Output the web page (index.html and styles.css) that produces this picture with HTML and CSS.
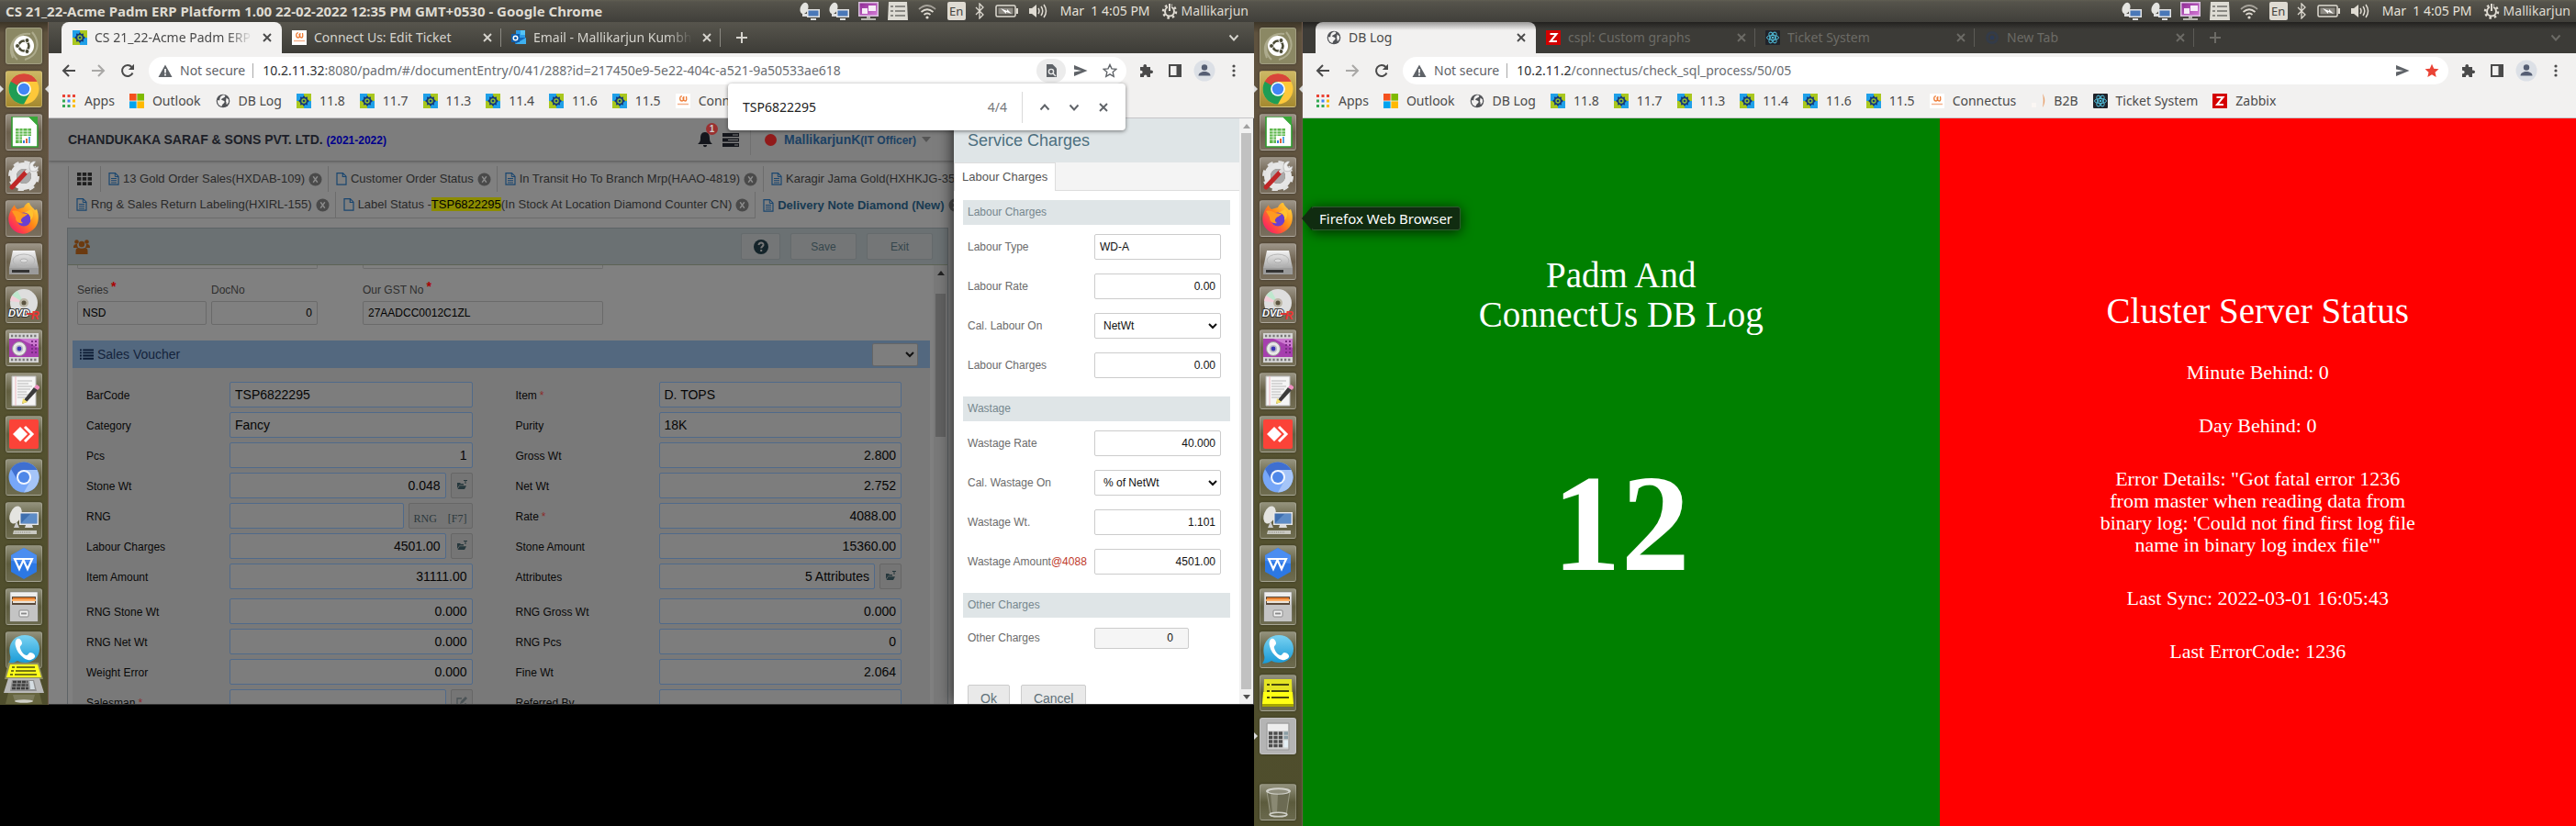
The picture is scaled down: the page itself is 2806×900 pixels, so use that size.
FILE: index.html
```html
<!DOCTYPE html>
<html lang="en">
<head>
<meta charset="utf-8">
<title>Dual monitor desktop</title>
<link rel="stylesheet" href="styles.css">
</head>
<body>
<svg class="defs" aria-hidden="true">
<defs>
<linearGradient id="gGrey" x1="0" y1="0" x2="0" y2="1"><stop offset="0" stop-color="#f4f4f4"/><stop offset="1" stop-color="#a9a9a9"/></linearGradient>
<linearGradient id="gFox" x1="1" y1="0" x2="0" y2="1"><stop offset="0" stop-color="#ffe94a"/><stop offset=".45" stop-color="#ff8a16"/><stop offset=".75" stop-color="#ff3b4d"/><stop offset="1" stop-color="#e3107c"/></linearGradient>
<linearGradient id="gPhone" x1="0" y1="0" x2="0" y2="1"><stop offset="0" stop-color="#7bd3f2"/><stop offset="1" stop-color="#1799d6"/></linearGradient>
<linearGradient id="gPink" x1="0" y1="0" x2="1" y2="1"><stop offset="0" stop-color="#8e2a94"/><stop offset="1" stop-color="#d47ad6"/></linearGradient>
<symbol id="ubuntu" viewBox="0 0 34 34"><path d="M5 30C-2 14 10 2 24 4M10 32C0 22 4 8 17 6M26 2c10 12 6 26-8 30" fill="none" stroke="#c4c3a8" stroke-width="2" opacity=".6"/><circle cx="17" cy="17" r="11" fill="#fff"/><circle cx="17" cy="17" r="5.500" fill="none" stroke="#4a4a35" stroke-width="2.600"/><g fill="#4a4a35" stroke="#fff" stroke-width="1"><circle cx="10" cy="17" r="2.500"/><circle cx="20.500" cy="11" r="2.500"/><circle cx="20.500" cy="23" r="2.500"/></g></symbol>
<symbol id="chrome" viewBox="0 0 34 34"><circle cx="17" cy="17" r="16.500" fill="#fdc83a"/><path d="M17 17 2.700 8.800A16.500 16.500 0 0 1 31.300 8.800H17z" fill="#d8453a"/><path d="M2.700 8.800A16.500 16.500 0 0 0 17 33.500L24 21 17 17z" fill="#1f9d55"/><path d="M9.800 21.200 2.700 8.800 17 9z" fill="#1f9d55"/><path d="M2.700 8.800A16.500 16.500 0 0 1 31.300 8.800H17A8 8 0 0 0 10 13z" fill="#d8453a"/><circle cx="17" cy="17" r="7.800" fill="#fff"/><circle cx="17" cy="17" r="6.200" fill="#4286f5"/></symbol>
<symbol id="sheet" viewBox="0 0 34 34"><path d="M4 0h19l9 9v24H4z" fill="#fff" stroke="#2e9b2e" stroke-width="1.600"/><path d="M22 0h10v10z" fill="#38a838"/><path d="M8 13h17v16H8z" fill="#5fb84d"/><path d="M8 16h17M8 19h17M8 22h17M8 25h17M12 13v16M16 13v16M21 13v16" stroke="#fff" stroke-width=".8"/><path d="M15 21h11v9H15z" fill="#fff"/><path d="M16 26h2v3h-2z" fill="#3b7dd8"/><path d="M19 24h2v5h-2z" fill="#e0643a"/><path d="M22 22h2v7h-2z" fill="#58a6e0"/></symbol>
<symbol id="settings" viewBox="0 0 34 34"><circle cx="17" cy="18" r="11.500" fill="none" stroke="#e6e6e6" stroke-width="7"/><circle cx="17" cy="18" r="15" fill="none" stroke="#e2e2e2" stroke-width="4" stroke-dasharray="6 5.780"/><circle cx="17" cy="18" r="8" fill="#aaa"/><path d="M4 30 19 14" stroke="#bf2727" stroke-width="5" stroke-linecap="round"/><path d="M19 14 26 8" stroke="#ddd" stroke-width="4"/><path d="M23 8c0-5 4-7 7-6l-3 4 2 3 4-2c0 5-5 7-9 5z" fill="#eee" stroke="#999" stroke-width=".5"/></symbol>
<symbol id="firefox" viewBox="0 0 34 34"><path d="M2 10c2-5 4-6 5-8 0 3 2 4 3 5l7-2c1-3 4-5 6-6 0 4 4 6 6 9l2-1c4 10 1 19-5 23-6 5-15 5-21-1C0 24-1 17 2 10z" fill="url(#gFox)"/><circle cx="17" cy="18" r="7.500" fill="#6a3fd0"/><path d="M4 9c4-1 7 0 10 2l7 1c-2 3-5 3-6 5-2 1-1 4 1 5-5 1-8-2-8-6z" fill="#ff9a1f"/><path d="M17 11c5-1 8 3 7 8 4-3 4-9 1-12z" fill="#ffc22e"/></symbol>
<symbol id="disk" viewBox="0 0 34 34"><path d="M5 5h24l4 19H1z" fill="url(#gGrey)"/><path d="M1 24h32v7H1z" fill="#9b9b9b"/><path d="M4 26h19v3H4z" fill="#333"/><ellipse cx="17" cy="16" rx="12" ry="7" fill="none" stroke="#b5b5b5"/><ellipse cx="17" cy="16" rx="4" ry="2" fill="#ddd" stroke="#a0a0a0" stroke-width=".7"/></symbol>
<symbol id="dvd" viewBox="0 0 34 34"><circle cx="17" cy="15" r="15" fill="#dedede"/><path d="M17 15 4 7A15 15 0 0 1 10 2z" fill="#bfe8cf"/><path d="M17 15 2 13A15 15 0 0 1 4 7z" fill="#f3cfd9"/><circle cx="17" cy="15" r="5" fill="#bdb8a8"/><circle cx="17" cy="15" r="2.500" fill="#5b5340"/><text x="0" y="30" font-family="Liberation Sans, sans-serif" font-size="11" font-weight="bold" font-style="italic" fill="#fff" stroke="#333" stroke-width="2" paint-order="stroke">DVD</text><path d="M20 26h6v2h-6z" fill="#d33"/><text x="25" y="33" font-family="Liberation Sans, sans-serif" font-size="12" font-weight="bold" font-style="italic" fill="#e33">R</text></symbol>
<symbol id="cam" viewBox="0 0 34 34"><path d="M1 1h32v32H1z" fill="#d5d5d5"/><path d="M1 7h32v20H1z" fill="#a63fae"/><path d="M12 7h21v10z" fill="#cc79d0"/><path d="M3 4h28M3 30h28" stroke="#777" stroke-width="2.500" stroke-dasharray="2.200 2"/><path d="M26 9v16M30 9v16" stroke="#7b2b85" stroke-width="2" stroke-dasharray="2 2"/><circle cx="12" cy="18" r="7.500" fill="#e8e8e8" stroke="#999"/><circle cx="12" cy="18" r="4" fill="#b9b9c4"/><circle cx="12" cy="18" r="2.400" fill="#3d35b5"/></symbol>
<symbol id="edit" viewBox="0 0 34 34"><path d="M4 1h26v32H4z" fill="#f5f5f5" stroke="#bbb"/><path d="M8 1v32" stroke="#f2b8c0"/><path d="M10 6h16M10 9h12M10 12h16M10 15h14M10 18h10M10 21h12M10 24h9" stroke="#b9b9b9" stroke-width="1"/><path d="M16 28 28 13l4 3-12 13-5 2z" fill="#3b3b3b"/><path d="m15 31 1-6 5 4z" fill="#f2df6b"/><path d="m28 13 3-3 4 3-3 3z" fill="#f08fc0"/></symbol>
<symbol id="anydesk" viewBox="0 0 34 34"><rect x="1" y="1" width="32" height="32" rx="2" fill="#fb4338"/><path d="m5 17 8-8 8 8-8 8z" fill="#fff"/><path d="m18 9 8 8-8 8" fill="none" stroke="#fff" stroke-width="3"/></symbol>
<symbol id="chromium" viewBox="0 0 34 34"><circle cx="17" cy="17" r="16.500" fill="#77a7f8"/><path d="M17 9h14.300A16.500 16.500 0 0 0 3 8l7 12z" fill="#3f6fd0"/><path d="M24 21 17 33.500A16.500 16.500 0 0 0 31.500 9H20z" fill="#a5c5f8"/><circle cx="17" cy="17" r="8" fill="#f1f6ff"/><circle cx="17" cy="17" r="6" fill="#4e87e8"/></symbol>
<symbol id="remote" viewBox="0 0 34 34"><ellipse cx="8" cy="11" rx="6" ry="10" transform="rotate(22 8 11)" fill="#e4e4e0"/><path d="m9 18 3 7H6z" fill="#ccc"/><rect x="12" y="8" width="21" height="14" fill="#e8e8e8"/><rect x="13.500" y="9.500" width="18" height="11" fill="#3f6fae"/><path d="M14 20 24 10h7v10z" fill="#5d8cc6"/><path d="M19 22h7l1 3h-9z" fill="#ddd"/><path d="M6 28h25v4H5z" fill="#c9c9c2"/><path d="M7 30h17" stroke="#8b8b80" stroke-dasharray="1 1"/></symbol>
<symbol id="wps" viewBox="0 0 34 34"><path d="m17 0 14 8v18l-14 8-14-8V8z" fill="#2c78e4"/><path d="m17 0 14 8v9L3 14V8z" fill="#4b8df0"/><path d="M7 12h9l5 11 5-11h-9l-5 11z" fill="none" stroke="#fff" stroke-width="2.200"/></symbol>
<symbol id="files" viewBox="0 0 34 34"><path d="M2 1h30v32H2z" fill="url(#gGrey)" stroke="#888" stroke-width=".6"/><path d="M4 6h26v9H4z" fill="#5b4a3a"/><path d="M5 7h24v2H5z" fill="#e07b2d"/><path d="M4 9h26v2H4z" fill="#ffb066"/><path d="M5 11h24v2H5z" fill="#e9e4dc"/><path d="M2 15h30v18H2z" fill="#c4c4c4"/><rect x="12" y="21" width="10" height="7" rx="1" fill="#f3f3f3" stroke="#888"/><path d="M14 23.500h6v2h-6z" fill="#8a8a8a"/></symbol>
<symbol id="phone" viewBox="0 0 34 34"><path d="M18 1c9 0 16 6 16 15s-7 15-16 15c-3 0-6-1-8-2-3 2-6 3-10 3 2-3 3-6 2-9C-1 10 7 1 18 1z" fill="url(#gPhone)"/><path d="M10 5c3-1 5 3 5 5s-3 3-2 5c1 4 4 8 7 8 2 0 2-3 4-3 3 0 6 3 5 5-3 4-8 4-12 1C12 22 9 18 8 13c-1-4 0-7 2-8z" fill="#fff"/></symbol>
<symbol id="notes" viewBox="0 0 34 34"><path d="M2 2h30l1 28H1z" fill="#e4e424"/><path d="M1 16h32l1 13H0z" fill="#ffff14"/><path d="M0 29h34v3H0z" fill="#a6a600"/><path d="M5 8h3M10 8h19M5 15h3M10 15h19M5 22h3M10 22h19" stroke="#4a4a10" stroke-width="2.200"/></symbol>
<symbol id="calculator" viewBox="0 0 34 34"><path d="M5 3h24v29H5z" fill="#d0d0d0" stroke="#999"/><path d="M6 4h22v7H6z" fill="#ededed"/><path d="M7 14h15M7 18.500h15M7 23h15M7 27.500h15" stroke="#4c4c4c" stroke-width="3.300" stroke-dasharray="4.200 1.200"/><path d="M23.500 14H28M23.500 18.500H28" stroke="#8b9ea6" stroke-width="3.300"/><path d="M23.500 21.500H28v8h-4.500z" fill="#e4eff5"/></symbol>
<symbol id="trash" viewBox="0 0 34 34"><path d="M5 5h25l-4 27H9z" fill="#6c6b53" stroke="#a5a490" stroke-width=".8"/><path d="M9 8h8l-1 21h-5z" fill="#8a8973"/><ellipse cx="17.500" cy="5" rx="13.500" ry="3.800" fill="#d2d2cb"/><ellipse cx="17.500" cy="5.500" rx="11" ry="2.200" fill="#8f8e7c"/><ellipse cx="17.500" cy="30.500" rx="9.500" ry="2.300" fill="none" stroke="#cfcfc6" stroke-width="1.600"/></symbol>

<symbol id="padm" viewBox="0 0 16 16"><path d="M0 0h8v8H0z" fill="#20a0e8"/><path d="M8 0h8v8H8z" fill="#a9c71e"/><path d="M0 8h8v8H0z" fill="#a9c71e"/><path d="M8 8h8v8H8z" fill="#20a0e8"/><path d="M8 2 9.500 4l2.500-.5L11.800 6 14 8l-2.200 2 .2 2.500-2.500-.5L8 14l-1.500-2-2.500.5L4.200 10 2 8l2.200-2L4 3.500l2.500.5z" fill="#14397a"/><circle cx="8" cy="8" r="2.700" fill="#8fbf3a"/><circle cx="8" cy="8" r="1.300" fill="#14397a"/></symbol>
<symbol id="cu" viewBox="0 0 16 16"><path d="M0 0h16v16H0z" fill="#fff"/><path d="M7 3c-3-1-3 5 0 5 2 0 1-3 1-4M9 3c-1 4 0 5 1.500 5S12 6 11.500 3" fill="none" stroke="#ee7a34" stroke-width="1.300"/><path d="M2 11.500h12" stroke="#f4b18c" stroke-width="1.500"/></symbol>
<symbol id="outlook" viewBox="0 0 16 16"><path d="M5 0h10v9H5z" fill="#2a9be8"/><path d="M10 0h5v5h-5z" fill="#55c3f5"/><path d="M4 8h12v7H4z" fill="#1467b8"/><path d="m4 15 12-7v7z" fill="#3fb0f0"/><path d="M0 4h9v9H0z" fill="#0f5cab"/><circle cx="4.500" cy="8.500" r="2.300" fill="none" stroke="#fff" stroke-width="1.400"/></symbol>
<symbol id="ms" viewBox="0 0 16 16"><path d="M0 0h7.600v7.600H0z" fill="#f4511e"/><path d="M8.400 0H16v7.600H8.400z" fill="#7fba00"/><path d="M0 8.400h7.600V16H0z" fill="#00a4ef"/><path d="M8.400 8.400H16V16H8.400z" fill="#ffb900"/></symbol>
<symbol id="globe" viewBox="0 0 16 16"><circle cx="8" cy="8" r="7.300" fill="#505256"/><path d="M8 1.500c3.500 0 2.500 2.500.5 3L6 6c0 1.500 2.500 1 3.500 2.500S7 11 6.500 14C3 13 1.500 10 2 7l2 .5c1-2-.5-4 4-6zM11.500 4.500 14 6.500v3L12 12c-1-1 0-2.500-1-3.500z" fill="#f2f1f0"/></symbol>
<symbol id="apps" viewBox="0 0 16 16"><path d="M1 1h3v3H1zM6.500 1h3v3h-3zM12 1h3v3h-3z" fill="#ea4335"/><path d="M1 6.500h3v3H1z" fill="#34a853"/><path d="M6.500 6.500h3v3h-3z" fill="#4285f4"/><path d="M12 6.500h3v3h-3z" fill="#fbbc04"/><path d="M1 12h3v3H1zM6.500 12h3v3h-3z" fill="#34a853"/><path d="M12 12h3v3h-3z" fill="#fbbc04"/></symbol>
<symbol id="react" viewBox="0 0 16 16"><rect width="16" height="16" rx="1" fill="#20232a"/><g fill="none" stroke="#4fb8d4" stroke-width="1"><ellipse cx="8" cy="8" rx="6.500" ry="2.600"/><ellipse cx="8" cy="8" rx="6.500" ry="2.600" transform="rotate(60 8 8)"/><ellipse cx="8" cy="8" rx="6.500" ry="2.600" transform="rotate(120 8 8)"/></g><circle cx="8" cy="8" r="1.300" fill="#4fb8d4"/></symbol>
<symbol id="zab" viewBox="0 0 16 16"><path d="M0 0h16v16H0z" fill="#d40000"/><path d="M4.500 4h7L5 12h7" fill="none" stroke="#fff" stroke-width="2"/></symbol>
<symbol id="b2b" viewBox="0 0 16 16"><path d="M13 0c3 5 3 10 0 15 1-5 1-10 0-15z" fill="#e8a06c"/><path d="M1 10h5v5H1z" fill="#fbf7f4"/></symbol>
<symbol id="newtab" viewBox="0 0 16 16"><circle cx="8" cy="8" r="5.500" fill="none" stroke="#333b48" stroke-width="3"/><circle cx="8" cy="8" r="2.500" fill="#2b3a55"/></symbol>

<symbol id="back" viewBox="0 0 16 16"><path d="M15 8H2M8 2 2 8l6 6" fill="none" stroke="currentColor" stroke-width="2"/></symbol>
<symbol id="fwd" viewBox="0 0 16 16"><path d="M1 8h13M8 2l6 6-6 6" fill="none" stroke="currentColor" stroke-width="2"/></symbol>
<symbol id="reload" viewBox="0 0 16 16"><path d="M13.500 10.500A6 6 0 1 1 12.500 4" fill="none" stroke="currentColor" stroke-width="2"/><path d="M15 .8V7H8.800z" fill="currentColor"/></symbol>
<symbol id="warn" viewBox="0 0 16 16"><path d="M8 1.500 15.500 15H.5z" fill="currentColor"/><path d="M8 6v4.500M8 11.500v2" stroke="#fff" stroke-width="1.700"/></symbol>
<symbol id="x" viewBox="0 0 16 16"><path d="m4 4 8 8M12 4l-8 8" stroke="currentColor" stroke-width="1.900"/></symbol>
<symbol id="plus" viewBox="0 0 16 16"><path d="M8 2v12M2 8h12" stroke="currentColor" stroke-width="2"/></symbol>
<symbol id="down" viewBox="0 0 16 16"><path d="m3.500 5.500 4.500 5 4.500-5" fill="none" stroke="currentColor" stroke-width="1.900"/></symbol>
<symbol id="up" viewBox="0 0 16 16"><path d="m3.500 10.500 4.500-5 4.500 5" fill="none" stroke="currentColor" stroke-width="1.900"/></symbol>
<symbol id="docfind" viewBox="0 0 16 16"><path d="M3 1h6.500L14 5.500V15H3z" fill="currentColor"/><circle cx="8" cy="9" r="2.600" fill="none" stroke="#ececec" stroke-width="1.400"/><path d="m10 11 3 3" stroke="#ececec" stroke-width="1.400"/></symbol>
<symbol id="send" viewBox="0 0 16 16"><path d="M1 2 15.500 8 1 14V9.500L9 8 1 6.500z" fill="currentColor"/></symbol>
<symbol id="star" viewBox="0 0 16 16"><path d="m8 1.500 2 4.400 4.800.5-3.600 3.200 1 4.700L8 11.900l-4.200 2.400 1-4.700L1.200 6.400 6 5.900z" fill="none" stroke="currentColor" stroke-width="1.400"/></symbol>
<symbol id="starf" viewBox="0 0 16 16"><path d="m8 .8 2.200 4.900 5.300.5-4 3.500 1.200 5.200L8 12.200l-4.700 2.700 1.200-5.200-4-3.500 5.300-.5z" fill="currentColor"/></symbol>
<symbol id="puzzle" viewBox="0 0 16 16"><path d="M2 4h3.500c-1-4 4.500-4 3.500 0H13v3.500c4-1 4 4.500 0 3.500V15H9.500c.5-3.500-4-3.500-3.500 0H2v-3.700c3.500.5 3.500-4 0-3.500z" fill="currentColor"/></symbol>
<symbol id="side" viewBox="0 0 16 16"><path d="M1 1h14v14H1zM3 3v10h6.500V3z" fill="currentColor" fill-rule="evenodd"/></symbol>
<symbol id="person" viewBox="0 0 24 24"><circle cx="12" cy="12" r="11.500" fill="#dce0e6"/><circle cx="12" cy="8.500" r="3.200" fill="#555e73"/><path d="M5.500 17.500c0-6 13-6 13 0z" fill="#555e73"/></symbol>
<symbol id="dots" viewBox="0 0 16 16"><g fill="currentColor"><circle cx="8" cy="3" r="1.600"/><circle cx="8" cy="8" r="1.600"/><circle cx="8" cy="13" r="1.600"/></g></symbol>

<symbol id="tRemote" viewBox="0 0 22 20"><ellipse cx="5" cy="7" rx="4.200" ry="6.500" transform="rotate(20 5 7)" fill="#e4e4e0"/><path d="M3 13h5v3H3z" fill="#ddd"/><path d="M8 8h14v9H8z" fill="#e2e2e2"/><path d="M9.500 9.500h11v6h-11z" fill="#4a78b8"/><path d="M12 18h6v2h-6z" fill="#ddd"/></symbol>
<symbol id="tPurple" viewBox="0 0 22 20"><path d="M0 0h22v16H0z" fill="#d9c3de"/><path d="M1.500 1.500h19v13h-19z" fill="url(#gPink)"/><path d="M4 7h6v6H4zM11 4h8v6h-8z" fill="#f6ecf7"/><path d="M9 16h4v2h6v2H3v-2h6z" fill="#b5b5ae"/></symbol>
<symbol id="tList" viewBox="0 0 22 20"><path d="M1 0h20l1 20H0z" fill="#dedcd4"/><path d="M3 5h3M8 5h11M3 10h3M8 10h11M3 15h3M8 15h11" stroke="#6f6e68" stroke-width="1.300"/></symbol>
<symbol id="tWifi" viewBox="0 0 22 20"><g fill="none" stroke="#dfdbd2" stroke-width="1.700"><path d="M2 8q9-8 18 0" opacity=".6"/><path d="M4.500 11q6.500-5.500 13 0"/><path d="M7.500 14q3.500-3 7 0"/></g><circle cx="11" cy="17" r="1.600" fill="#dfdbd2"/></symbol>
<symbol id="tBt" viewBox="0 0 12 18"><path d="m2 5 8 8-4 4V1l4 4-8 8" fill="none" stroke="#dfdbd2" stroke-width="1.300"/></symbol>
<symbol id="tBat" viewBox="0 0 26 16"><rect x="1" y="2" width="21" height="12" rx="1.500" fill="none" stroke="#dfdbd2" stroke-width="1.500"/><path d="M3.500 4.500h16v7h-16z" fill="#8d8a83"/><path d="M23 5h2v6h-2z" fill="#dfdbd2"/><path d="m6 5 7 3v-2l5 5-6-2v2z" fill="#fff"/></symbol>
<symbol id="tVol" viewBox="0 0 22 18"><path d="M1 6h3l5-4v14l-5-4H1z" fill="#dfdbd2"/><path d="M11 6q2 3 0 6M14 4q3.500 5 0 10M17 2q5 7 0 14" fill="none" stroke="#dfdbd2" stroke-width="1.500"/></symbol>
<symbol id="tGear" viewBox="0 0 18 18"><circle cx="9" cy="9.500" r="5" fill="none" stroke="#dfdbd2" stroke-width="2"/><circle cx="9" cy="9.500" r="7" fill="none" stroke="#dfdbd2" stroke-width="2.500" stroke-dasharray="2.500 3"/><path d="M7 0h4v9H7z" fill="#504e48"/><path d="M9 1v8" stroke="#dfdbd2" stroke-width="2"/></symbol>

<symbol id="doc" viewBox="0 0 12 14"><path d="M1 .7h6.500L11 4.200v9H1z" fill="none" stroke="#1a466f" stroke-width="1.200"/><path d="M3 6.500h6M3 8.700h6M3 11h6M7.300 1v3.500H11" fill="none" stroke="#1a466f" stroke-width="1"/></symbol>
<symbol id="blank" viewBox="0 0 12 14"><path d="M1 .7h6.500L11 4.200v9H1zM7.300 1v3.500H11" fill="none" stroke="#1a466f" stroke-width="1.200"/></symbol>
<symbol id="xc" viewBox="0 0 16 16"><circle cx="8" cy="8" r="7.500" fill="#4a4a4a"/><path d="m5.500 4.500 5 7M10.500 4.500l-5 7" stroke="#8a8a8a" stroke-width="1.500"/></symbol>
<symbol id="gridi" viewBox="0 0 16 14"><path d="M0 0h4.400v3.700H0zM5.800 0h4.400v3.700H5.800zM11.600 0H16v3.700h-4.400zM0 5.100h4.400v3.700H0zM5.800 5.100h4.400v3.700H5.800zM11.600 5.100H16v3.700h-4.400zM0 10.200h4.400v3.700H0zM5.800 10.200h4.400v3.700H5.800zM11.600 10.200H16v3.700h-4.400z" fill="#1e1e1e"/></symbol>
<symbol id="folder" viewBox="0 0 12 12"><path d="M1 9V3h3l1 1h3v1.500H3.500z" fill="#26383d"/><path d="M3.500 6.200H11L9 10H1.500zM8 0h4v1H8zM9.500 0h1v4h-1z" fill="#26383d"/></symbol>
<symbol id="pen" viewBox="0 0 12 12"><path d="M10 7v4H1V2h5" fill="none" stroke="#4b5356" stroke-width="1.300"/><path d="m4 8 1-3 5-5 2 2-5 5z" fill="#4b5356"/></symbol>
</defs>
</svg>

<main class="desktop">
<section class="screen screen-left">
  <header class="panel">
    <h1 class="panel-title">CS 21_22-Acme Padm ERP Platform 1.00 22-02-2022 12:35 PM GMT+0530 - Google Chrome</h1>
    <div class="tray">
      <span class="cell"><svg class="i22"><use href="#tRemote"/></svg></span><span class="cell"><svg class="i22"><use href="#tRemote"/></svg></span><span class="cell"><svg class="i22"><use href="#tPurple"/></svg></span><span class="cell"><svg class="i22"><use href="#tList"/></svg></span><span class="cell"><svg class="i22"><use href="#tWifi"/></svg></span><span class="cell"><b class="lang">En</b></span>
      <span class="cell-bt"><svg class="bt"><use href="#tBt"/></svg></span><span class="cell-bat"><svg class="bat"><use href="#tBat"/></svg></span><span class="cell-vol"><svg class="vol"><use href="#tVol"/></svg></span>
      <time class="clock">Mar&nbsp; 1 4:05 PM</time><svg class="gear"><use href="#tGear"/></svg><span>Mallikarjun</span>
    </div>
  </header>
  <div class="workspace">
    <nav class="launcher" aria-label="Launcher">
      <button class="tile dash" aria-label="Dash"><svg><use href="#ubuntu"/></svg></button>
      <button class="tile active" aria-label="Google Chrome"><svg><use href="#chrome"/></svg></button>
      <button class="tile" aria-label="Calc"><svg><use href="#sheet"/></svg></button>
      <button class="tile" aria-label="Settings"><svg><use href="#settings"/></svg></button>
      <button class="tile" aria-label="Firefox"><svg><use href="#firefox"/></svg></button>
      <button class="tile" aria-label="Disk"><svg><use href="#disk"/></svg></button>
      <button class="tile" aria-label="Disc"><svg><use href="#dvd"/></svg></button>
      <button class="tile" aria-label="Recorder"><svg><use href="#cam"/></svg></button>
      <button class="tile" aria-label="Text editor"><svg><use href="#edit"/></svg></button>
      <button class="tile" aria-label="AnyDesk"><svg><use href="#anydesk"/></svg></button>
      <button class="tile" aria-label="Chromium"><svg><use href="#chromium"/></svg></button>
      <button class="tile" aria-label="Remote desktop"><svg><use href="#remote"/></svg></button>
      <button class="tile" aria-label="Writer"><svg><use href="#wps"/></svg></button>
      <button class="tile" aria-label="Files"><svg><use href="#files"/></svg></button>
      <button class="tile" aria-label="Phone"><svg><use href="#phone"/></svg></button>
      <svg class="stack" viewBox="0 0 44 46"><path d="M5 1h33l5 18H1z" fill="#8f8e60"/><path d="M7 3h30l4 14H3z" fill="#ffff1c"/><path d="M9 6h3M14 6h20M8 10h3M13 10h22M7 14h3M12 14h24" stroke="#4a4a10" stroke-width="1.500"/><path d="M5 18h34l5 16H0z" fill="#b9b9b9"/><path d="M9 20h24l3 12H7z" fill="#8f8f8f"/><path d="M10 22h16M9.500 25.500h17M9 29h18" stroke="#3e3e3e" stroke-width="2.500" stroke-dasharray="4 1"/><path d="M28 21h4l2 9h-5z" fill="#d5dde2"/><path d="M5 34h34l3 12H2z" fill="#66653f"/><path d="M10 36h24l-2 7H12z" fill="#7c7b5c"/><ellipse cx="22" cy="43" rx="10" ry="1.700" fill="#d0d0c8"/></svg>
    </nav>
    <div class="browser">
      <div class="tabstrip">
        <div class="tab current"><svg class="i16"><use href="#padm"/></svg><span class="tab-name fade">CS 21_22-Acme Padm ERP Platform</span><button class="ib" aria-label="Close tab"><svg class="i16"><use href="#x"/></svg></button></div>
        <div class="tab"><svg class="i16"><use href="#cu"/></svg><span class="tab-name">Connect Us: Edit Ticket</span><button class="ib" aria-label="Close tab"><svg class="i16"><use href="#x"/></svg></button></div>
        <div class="tab"><svg class="i16"><use href="#outlook"/></svg><span class="tab-name fade">Email - Mallikarjun Kumbhar</span><button class="ib" aria-label="Close tab"><svg class="i16"><use href="#x"/></svg></button></div>
        <button class="ib newtab" aria-label="New tab"><svg class="i16"><use href="#plus"/></svg></button>
        <button class="ib tabmenu" aria-label="Search tabs"><svg class="i16"><use href="#down"/></svg></button>
      </div>
      <div class="toolbar">
        <button class="ib" aria-label="Back"><svg class="i16"><use href="#back"/></svg></button><button class="ib off" aria-label="Forward"><svg class="i16"><use href="#fwd"/></svg></button><button class="ib" aria-label="Reload"><svg class="i16"><use href="#reload"/></svg></button>
        <div class="omnibox"><svg class="i16 grey"><use href="#warn"/></svg><span class="secure">Not secure</span><span class="url"><b>10.2.11.32</b>:8080/padm/#/documentEntry/0/41/288?id=217450e9-5e22-404c-a521-9a50533ae618</span><button class="ib found" aria-label="Find in page"><svg class="i16"><use href="#docfind"/></svg></button><button class="ib grey" aria-label="Share"><svg class="i16"><use href="#send"/></svg></button><button class="ib grey" aria-label="Bookmark"><svg class="i16"><use href="#star"/></svg></button></div>
        <button class="ib" aria-label="Extensions"><svg class="i16"><use href="#puzzle"/></svg></button><button class="ib" aria-label="Side panel"><svg class="i16"><use href="#side"/></svg></button><button class="ib" aria-label="Profile"><svg class="i24"><use href="#person"/></svg></button><button class="ib" aria-label="Menu"><svg class="i16"><use href="#dots"/></svg></button>
      </div>
      <nav class="bookmarks">
        <a href="#"><svg class="i16"><use href="#apps"/></svg>Apps</a><a href="#"><svg class="i16"><use href="#ms"/></svg>Outlook</a><a href="#"><svg class="i16"><use href="#globe"/></svg>DB Log</a><a href="#"><svg class="i16"><use href="#padm"/></svg>11.8</a><a href="#"><svg class="i16"><use href="#padm"/></svg>11.7</a><a href="#"><svg class="i16"><use href="#padm"/></svg>11.3</a><a href="#"><svg class="i16"><use href="#padm"/></svg>11.4</a><a href="#"><svg class="i16"><use href="#padm"/></svg>11.6</a><a href="#"><svg class="i16"><use href="#padm"/></svg>11.5</a><a href="#"><svg class="i16"><use href="#cu"/></svg>Connectus</a>
      </nav>
      <div class="findbar"><input type="text" value="TSP6822295" aria-label="Find in page"><span class="count">4/4</span><button class="ib" aria-label="Previous"><svg class="i16"><use href="#up"/></svg></button><button class="ib" aria-label="Next"><svg class="i16"><use href="#down"/></svg></button><button class="ib" aria-label="Close"><svg class="i16"><use href="#x"/></svg></button></div>

      <div class="erp">
        <div class="erp-main">
          <header class="erp-head">
            <h2>CHANDUKAKA SARAF &amp; SONS PVT. LTD. <small>(2021-2022)</small></h2>
            <button class="bell" aria-label="Notifications"><svg viewBox="0 0 18 18"><path d="M9 1c4 0 5 3 5 7 0 3 1 4 3 6H1c2-2 3-3 3-6 0-4 1-7 5-7zM7 15h4c0 3-4 3-4 0z" fill="#14161c"/></svg><span class="badge">1</span></button>
            <svg class="tasks" viewBox="0 0 18 15"><path d="M0 0h18v4H0zM0 5.500h18v4H0zM0 11h18v4H0z" fill="#14161c"/><path d="M11 2h6M6 7.500h11M13 13h4" stroke="#808080" stroke-width="1"/></svg>
            <div class="user"><i class="dot"></i><a href="#">MallikarjunK<small>(IT Officer)</small></a><i class="caret"></i></div>
          </header>
          <nav class="docs">
            <div class="docrow"><span class="doc-grid"><svg class="igrid"><use href="#gridi"/></svg></span><a href="#"><svg class="idoc"><use href="#doc"/></svg>13 Gold Order Sales(HXDAB-109)<svg class="ix"><use href="#xc"/></svg></a><a href="#"><svg class="idoc"><use href="#blank"/></svg>Customer Order Status<svg class="ix"><use href="#xc"/></svg></a><a href="#"><svg class="idoc"><use href="#doc"/></svg>In Transit Ho To Branch Mrp(HAAO-4819)<svg class="ix"><use href="#xc"/></svg></a><a href="#"><svg class="idoc"><use href="#doc"/></svg>Karagir Jama Gold(HXHKJG-353)</a></div>
            <div class="docrow second"><a class="first" href="#"><svg class="idoc"><use href="#doc"/></svg>Rng &amp; Sales Return Labeling(HXIRL-155)<svg class="ix"><use href="#xc"/></svg></a><a href="#"><svg class="idoc"><use href="#blank"/></svg><span>Label Status -<mark>TSP6822295</mark>(In Stock At Location Diamond Counter CN)</span><svg class="ix"><use href="#xc"/></svg></a><a class="on" href="#"><svg class="idoc"><use href="#doc"/></svg>Delivery Note Diamond (New)<svg class="ix"><use href="#xc"/></svg></a></div>
          </nav>
          <section class="voucher">
            <div class="vhead"><svg class="users" viewBox="0 0 18 17"><g fill="#6b3a10"><circle cx="3.500" cy="3.500" r="2.300"/><circle cx="14.500" cy="3.500" r="2.300"/><circle cx="9" cy="6" r="3.200"/><path d="M0 10c0-3 1-4 4-4 0 2 1 3 1 4H0zM18 10c0-3-1-4-4-4 0 2-1 3-1 4h5zM2.500 17v-3c0-3 1-4 3-4 2 1 5 1 7 0 2 0 3 1 3 4v3z"/></g></svg>
              <button class="btn help" aria-label="Help"><svg viewBox="0 0 16 16"><circle cx="8" cy="8" r="8" fill="#14242a"/><path d="M5.500 6c0-3.500 5.500-3 5 0-.3 1.500-2.300 1.500-2.300 3.500M8.200 11v2" fill="none" stroke="#777" stroke-width="2"/></svg></button><button class="btn">Save</button><button class="btn">Exit</button></div>
            <div class="vbody">
              <div class="vscroll">
                <div class="ghosts"><i></i><i></i></div>
                <div class="docline">
                  <div class="f1"><label for="series">Series<sup>*</sup></label><input id="series" value="NSD"></div>
                  <div class="f2"><label for="docno">DocNo</label><input id="docno" class="num" value="0"></div>
                  <div class="f3"><label for="gst">Our GST No<sup>*</sup></label><input id="gst" value="27AADCC0012C1ZL"></div>
                </div>
                <div class="bar"><svg viewBox="0 0 16 12"><path d="M0 0h2v2H0zM3.500 0H16v2H3.500zM0 3.300h2v2H0zM3.500 3.300H16v2H3.500zM0 6.600h2v2H0zM3.500 6.600H16v2H3.500zM0 10h2v2H0zM3.500 10H16v2H3.500z" fill="#0b1a33"/></svg><h3>Sales Voucher</h3><select aria-label="Section"><option></option></select></div>
                <div class="form">
                  <div class="col">
                    <div class="row"><label for="l1">BarCode</label><input id="l1" value="TSP6822295"></div>
                    <div class="row"><label for="l2">Category</label><input id="l2" value="Fancy"></div>
                    <div class="row"><label for="l3">Pcs</label><input id="l3" class="num" value="1"></div>
                    <div class="row"><label for="l4">Stone Wt</label><input id="l4" class="num" value="0.048"><button class="mini" aria-label="Open"><svg><use href="#folder"/></svg></button></div>
                    <div class="row"><label for="l5">RNG</label><input id="l5" value=""><button class="mini wide">RNG <span>[F7]</span></button></div>
                    <div class="row"><label for="l6">Labour Charges</label><input id="l6" class="num" value="4501.00"><button class="mini" aria-label="Open"><svg><use href="#folder"/></svg></button></div>
                    <div class="row"><label for="l7">Item Amount</label><input id="l7" class="num" value="31111.00"></div>
                    <div class="row gap"><label for="l8">RNG Stone Wt</label><input id="l8" class="num" value="0.000"></div>
                    <div class="row"><label for="l9">RNG Net Wt</label><input id="l9" class="num" value="0.000"></div>
                    <div class="row"><label for="l10">Weight Error</label><input id="l10" class="num" value="0.000"></div>
                    <div class="row"><label for="l11">Salesman<em>*</em></label><input id="l11" value=""><button class="mini" aria-label="Edit"><svg><use href="#pen"/></svg></button></div>
                  </div>
                  <div class="col">
                    <div class="row"><label for="r1">Item<em>*</em></label><input id="r1" value="D. TOPS"></div>
                    <div class="row"><label for="r2">Purity</label><input id="r2" value="18K"></div>
                    <div class="row"><label for="r3">Gross Wt</label><input id="r3" class="num" value="2.800"></div>
                    <div class="row"><label for="r4">Net Wt</label><input id="r4" class="num" value="2.752"></div>
                    <div class="row"><label for="r5">Rate<em>*</em></label><input id="r5" class="num" value="4088.00"></div>
                    <div class="row"><label for="r6">Stone Amount</label><input id="r6" class="num" value="15360.00"></div>
                    <div class="row"><label for="r7">Attributes</label><input id="r7" class="num" value="5 Attributes"><button class="mini" aria-label="Open"><svg><use href="#folder"/></svg></button></div>
                    <div class="row gap"><label for="r8">RNG Gross Wt</label><input id="r8" class="num" value="0.000"></div>
                    <div class="row"><label for="r9">RNG Pcs</label><input id="r9" class="num" value="0"></div>
                    <div class="row"><label for="r10">Fine Wt</label><input id="r10" class="num" value="2.064"></div>
                    <div class="row"><label for="r11">Referred By</label><input id="r11" value=""></div>
                  </div>
                </div>
              </div>
              <div class="sb dim"><i class="tri-up"></i><b></b></div>
            </div>
          </section>
        </div>
        <aside class="charges">
          <div class="cbody">
            <h2>Service Charges</h2>
            <div class="ctabs"><button>Labour Charges</button></div>
            <form>
              <h3>Labour Charges</h3>
              <div class="crow"><label for="c1">Labour Type</label><input id="c1" value="WD-A"></div>
              <div class="crow"><label for="c2">Labour Rate</label><input id="c2" class="num" value="0.00"></div>
              <div class="crow"><label for="c3">Cal. Labour On</label><select id="c3"><option>NetWt</option></select></div>
              <div class="crow"><label for="c4">Labour Charges</label><input id="c4" class="num" value="0.00"></div>
              <h3>Wastage</h3>
              <div class="crow"><label for="c5">Wastage Rate</label><input id="c5" class="num" value="40.000"></div>
              <div class="crow"><label for="c6">Cal. Wastage On</label><select id="c6"><option>% of NetWt</option></select></div>
              <div class="crow"><label for="c7">Wastage Wt.</label><input id="c7" class="num" value="1.101"></div>
              <div class="crow"><label for="c8">Wastage Amount<em>@4088</em></label><input id="c8" class="num" value="4501.00"></div>
              <h3>Other Charges</h3>
              <div class="crow other"><label for="c9">Other Charges</label><input id="c9" class="num" value="0" readonly></div>
              <div class="cbtns"><button type="button">Ok</button><button type="button">Cancel</button></div>
            </form>
          </div>
          <div class="sb"><i class="tri-up"></i><b></b><i class="tri-down"></i></div>
        </aside>
      </div>
    </div>
  </div>
</section>

<section class="screen screen-right">
  <header class="panel">
    <div class="tray">
      <span class="cell"><svg class="i22"><use href="#tRemote"/></svg></span><span class="cell"><svg class="i22"><use href="#tRemote"/></svg></span><span class="cell"><svg class="i22"><use href="#tPurple"/></svg></span><span class="cell"><svg class="i22"><use href="#tList"/></svg></span><span class="cell"><svg class="i22"><use href="#tWifi"/></svg></span><span class="cell"><b class="lang">En</b></span>
      <span class="cell-bt"><svg class="bt"><use href="#tBt"/></svg></span><span class="cell-bat"><svg class="bat"><use href="#tBat"/></svg></span><span class="cell-vol"><svg class="vol"><use href="#tVol"/></svg></span>
      <time class="clock">Mar&nbsp; 1 4:05 PM</time><svg class="gear"><use href="#tGear"/></svg><span>Mallikarjun</span>
    </div>
  </header>
  <div class="workspace">
    <nav class="launcher" aria-label="Launcher">
      <button class="tile dash" aria-label="Dash"><svg><use href="#ubuntu"/></svg></button>
      <button class="tile active" aria-label="Google Chrome"><svg><use href="#chrome"/></svg></button>
      <button class="tile" aria-label="Calc"><svg><use href="#sheet"/></svg></button>
      <button class="tile" aria-label="Settings"><svg><use href="#settings"/></svg></button>
      <button class="tile" aria-label="Firefox"><svg><use href="#firefox"/></svg><span class="tooltip">Firefox Web Browser</span></button>
      <button class="tile" aria-label="Disk"><svg><use href="#disk"/></svg></button>
      <button class="tile" aria-label="Disc"><svg><use href="#dvd"/></svg></button>
      <button class="tile" aria-label="Recorder"><svg><use href="#cam"/></svg></button>
      <button class="tile" aria-label="Text editor"><svg><use href="#edit"/></svg></button>
      <button class="tile" aria-label="AnyDesk"><svg><use href="#anydesk"/></svg></button>
      <button class="tile" aria-label="Chromium"><svg><use href="#chromium"/></svg></button>
      <button class="tile" aria-label="Remote desktop"><svg><use href="#remote"/></svg></button>
      <button class="tile" aria-label="Writer"><svg><use href="#wps"/></svg></button>
      <button class="tile" aria-label="Files"><svg><use href="#files"/></svg></button>
      <button class="tile" aria-label="Phone"><svg><use href="#phone"/></svg></button>
      <button class="tile" aria-label="Notes"><svg><use href="#notes"/></svg></button>
      <button class="tile lit" aria-label="Calculator"><svg><use href="#calculator"/></svg></button>
      <button class="tile bottom" aria-label="Trash"><svg><use href="#trash"/></svg></button>
    </nav>
    <div class="browser inactive">
      <div class="tabstrip">
        <div class="tab current"><svg class="i16"><use href="#globe"/></svg><span class="tab-name">DB Log</span><button class="ib" aria-label="Close tab"><svg class="i16"><use href="#x"/></svg></button></div>
        <div class="tab"><svg class="i16"><use href="#zab"/></svg><span class="tab-name">cspl: Custom graphs</span><button class="ib" aria-label="Close tab"><svg class="i16"><use href="#x"/></svg></button></div>
        <div class="tab"><svg class="i16"><use href="#react"/></svg><span class="tab-name">Ticket System</span><button class="ib" aria-label="Close tab"><svg class="i16"><use href="#x"/></svg></button></div>
        <div class="tab"><svg class="i16"><use href="#newtab"/></svg><span class="tab-name">New Tab</span><button class="ib" aria-label="Close tab"><svg class="i16"><use href="#x"/></svg></button></div>
        <button class="ib newtab" aria-label="New tab"><svg class="i16"><use href="#plus"/></svg></button>
        <button class="ib tabmenu" aria-label="Search tabs"><svg class="i16"><use href="#down"/></svg></button>
      </div>
      <div class="toolbar">
        <button class="ib" aria-label="Back"><svg class="i16"><use href="#back"/></svg></button><button class="ib off" aria-label="Forward"><svg class="i16"><use href="#fwd"/></svg></button><button class="ib" aria-label="Reload"><svg class="i16"><use href="#reload"/></svg></button>
        <div class="omnibox"><svg class="i16 grey"><use href="#warn"/></svg><span class="secure">Not secure</span><span class="url"><b>10.2.11.2</b>/connectus/check_sql_process/50/05</span><button class="ib red" aria-label="Share"><svg class="i16 grey"><use href="#send"/></svg></button><button class="ib red" aria-label="Bookmark"><svg class="i16"><use href="#starf"/></svg></button></div>
        <button class="ib" aria-label="Extensions"><svg class="i16"><use href="#puzzle"/></svg></button><button class="ib" aria-label="Side panel"><svg class="i16"><use href="#side"/></svg></button><button class="ib" aria-label="Profile"><svg class="i24"><use href="#person"/></svg></button><button class="ib" aria-label="Menu"><svg class="i16"><use href="#dots"/></svg></button>
      </div>
      <nav class="bookmarks">
        <a href="#"><svg class="i16"><use href="#apps"/></svg>Apps</a><a href="#"><svg class="i16"><use href="#ms"/></svg>Outlook</a><a href="#"><svg class="i16"><use href="#globe"/></svg>DB Log</a><a href="#"><svg class="i16"><use href="#padm"/></svg>11.8</a><a href="#"><svg class="i16"><use href="#padm"/></svg>11.7</a><a href="#"><svg class="i16"><use href="#padm"/></svg>11.3</a><a href="#"><svg class="i16"><use href="#padm"/></svg>11.4</a><a href="#"><svg class="i16"><use href="#padm"/></svg>11.6</a><a href="#"><svg class="i16"><use href="#padm"/></svg>11.5</a><a href="#"><svg class="i16"><use href="#cu"/></svg>Connectus</a><a href="#"><svg class="i16"><use href="#b2b"/></svg>B2B</a><a href="#"><svg class="i16"><use href="#react"/></svg>Ticket System</a><a href="#"><svg class="i16"><use href="#zab"/></svg>Zabbix</a>
      </nav>
      <div class="status">
        <section class="ok"><h2>Padm And<br>ConnectUs DB Log</h2><strong>12</strong></section>
        <section class="bad"><h2>Cluster Server Status</h2><p>Minute Behind: 0</p><p>Day Behind: 0</p><p>Error Details: "Got fatal error 1236 from master when reading data from binary log: 'Could not find first log file name in binary log index file'"</p><p>Last Sync: 2022-03-01 16:05:43</p><p>Last ErrorCode: 1236</p></section>
      </div>
    </div>
  </div>
</section>
</main>
</body>
</html>
```
FILE: styles.css
```css
* { box-sizing: border-box; }
body { margin: 0; background: #000; font-family: "Noto Sans", "Open Sans", sans-serif; font-size: 14px; line-height: 20px; }
button, input, select { font: inherit; color: inherit; margin: 0; }
h1, h2, h3, p { margin: 0; font-weight: normal; font-size: inherit; }
a { color: inherit; text-decoration: none; }
svg { flex: none; display: block; }
.defs { position: absolute; width: 0; height: 0; }

.desktop { display: grid; grid-template-columns: 1366fr 1440fr; align-items: start; }
.screen { display: flex; flex-direction: column; min-width: 0; min-height: 0; overflow: hidden; }
.screen-left { aspect-ratio: 1366 / 768; }
.screen-right { aspect-ratio: 1440 / 900; }

/* Top panel */
.panel { display: flex; align-items: center; flex: none; height: 24px; padding: 0 6px; background: linear-gradient(#605e52, #55534b 10%, #403f3a); color: #dfdbd2; }
.panel-title { font-weight: bold; font-size: 15px; white-space: nowrap; }
.tray { display: flex; align-items: center; margin-left: auto; white-space: nowrap; }
.cell, .cell-bt, .cell-bat, .cell-vol { display: flex; justify-content: center; }
.cell { width: 32px; }
.cell-bt { width: 18px; }
.cell-bat { width: 42px; }
.cell-vol { width: 26px; margin-right: 11px; }
.i22 { width: 22px; height: 20px; }
.bt { width: 12px; height: 18px; }
.bat { width: 26px; height: 16px; }
.vol { width: 22px; height: 18px; }
.gear { width: 18px; height: 18px; margin: 0 4px 0 12px; }
.lang { width: 20px; height: 20px; border-radius: 2px; background: #dfdbd2; color: #45443f; font-weight: normal; text-align: center; font-size: 13px; }
.clock { color: #e6e2da; }

.workspace { display: flex; flex: 1; min-height: 0; }

/* Launcher */
.launcher { position: relative; z-index: 3; display: flex; flex-direction: column; gap: 7px; flex: none; width: 53px; padding: 6px 7px 6px 6px; background: linear-gradient(#3c3527, #5f523e 12px, #615440 30%, #555230 55%, #4e4d2c); box-shadow: inset -1px 0 #6f5a4c; }
.screen-left .launcher { padding-bottom: 0; }
.tile { position: relative; flex: none; width: 40px; height: 40px; padding: 2px; border: 1px solid rgba(255, 255, 255, .2); border-radius: 3px; background: linear-gradient(rgba(255, 255, 255, .38), rgba(255, 255, 255, .08) 50%, rgba(255, 255, 255, .16)); box-shadow: 0 0 3px rgba(0, 0, 0, .35); }
.tile svg { width: 34px; height: 34px; }
.tile.dash { background: #8b8864; }
.tile.active { background: linear-gradient(#cdb864, #a5892f); }
.tile.lit { background: #b4b4b4; }
.tile.bottom { margin-top: auto; }
.tile.active::before, .tile.lit::before, .tile.active::after { content: ""; position: absolute; top: 15px; border: 4px solid transparent; }
.tile.active::before, .tile.lit::before { left: -7px; border-left-color: #ddd; border-right: 0; }
.tile.active::after { right: -8px; border-right-color: #ddd; border-left: 0; }
.stack { position: relative; width: 44px; height: 46px; margin: -14px -2px 0; }
.tooltip { position: absolute; left: 55px; top: 6px; padding: 2px 8px; border: 1px solid #2f5a30; border-radius: 3px; background: #102c10; color: #fff; font-size: 15px; white-space: nowrap; box-shadow: 0 2px 14px rgba(0, 0, 0, .7); }
.tooltip::before { content: ""; position: absolute; right: 100%; top: -1px; border: 13px solid transparent; border-right: 11px solid #102c10; border-left: 0; }

/* Browser chrome */
.browser { position: relative; display: flex; flex-direction: column; flex: 1; min-width: 0; background: #f2f1f0; color: #4a4a4a; }
.i16 { width: 16px; height: 16px; }
.i24 { width: 24px; height: 24px; }
.ib { display: flex; align-items: center; justify-content: center; flex: none; width: 16px; height: 16px; padding: 0; border: 0; background: none; color: inherit; }
.tabstrip { display: flex; flex: none; height: 34px; padding: 0 14px; background: linear-gradient(#57554d, #3d3c37); color: #d6d4ce; }
.inactive .tabstrip { background: linear-gradient(#22211f, #3c3b37 8px); color: #6c6b66; }
.tab { position: relative; display: flex; align-items: center; gap: 8px; flex: 0 1 239px; min-width: 0; padding: 0 7px 0 11px; }
.tab::after { content: ""; position: absolute; right: 0; top: 7px; height: 20px; width: 1px; background: #8b8982; }
.inactive .tab::after { background: #5c5b56; }
.tab.current { flex-basis: 240px; padding: 0 8px 0 12px; border-radius: 8px 8px 0 0; background: #f2f1f0; color: #4a4a4a; }
.inactive .tab.current { background: linear-gradient(#9a9998, #f2f1f0 9px); }
.tab.current::after { display: none; }
.tab-name { flex: 1; overflow: hidden; white-space: nowrap; }
.fade { -webkit-mask-image: linear-gradient(90deg, #000 84%, transparent); mask-image: linear-gradient(90deg, #000 84%, transparent); }
.newtab { align-self: center; margin-left: 15px; }
.tabmenu { align-self: center; margin-left: auto; }
.toolbar { display: flex; align-items: center; gap: 16px; flex: none; height: 38px; padding: 0 14px; }
.toolbar .off { color: #a9a8a6; }
.omnibox { display: flex; align-items: center; flex: 1; min-width: 0; height: 30px; margin: 0 -3px 0 -1px; padding: 0 10px; border-radius: 15px; background: #fff; gap: 16px; }
.grey { color: #5f6368; }
.red { color: #ea4335; }
.secure { margin-left: -8px; padding-right: 8px; border-right: 1px solid #a9a9a9; line-height: 16px; color: #5f6368; white-space: nowrap; }
.url { flex: 1; margin-left: -6px; overflow: hidden; white-space: nowrap; color: #6a6d72; }
.url b { font-weight: normal; color: #303134; }
.found { width: 32px; height: 26px; margin-right: -8px; border-radius: 13px; background: #ececec; color: #5f6368; }
.bookmarks { display: flex; align-items: center; gap: 16px; flex: none; height: 33px; padding: 0 14px 5px; border-bottom: 1px solid #c6c5c8; white-space: nowrap; overflow: hidden; }
.bookmarks a { display: flex; align-items: center; gap: 9px; }
.findbar { position: absolute; z-index: 4; top: 67px; right: 140px; display: flex; align-items: center; width: 433px; height: 51px; padding: 0 16px; border-radius: 4px; background: #fff; box-shadow: 0 1px 4px rgba(0, 0, 0, .5); gap: 16px; color: #5f6368; }
.findbar input { flex: 1; min-width: 0; padding: 0; border: 0; outline: 0; background: none; color: #222; }
.count { padding-right: 16px; border-right: 1px solid #dadada; line-height: 34px; color: #77797c; }

/* ERP page */
.erp { display: flex; flex: 1; min-height: 0; overflow: hidden; border-bottom: 1px solid #333; font-family: "Liberation Sans", Arial, sans-serif; font-size: 12px; line-height: 16px; }
.erp-main { display: flex; flex-direction: column; flex: 1; min-width: 0; overflow: hidden; background: #808080; color: #111; }
.erp-head { display: flex; align-items: center; flex: none; height: 46px; padding: 0 25px 0 21px; background: #7d7d7d; box-shadow: 0 1px 3px #555; }
.erp-head h2 { font-weight: bold; font-size: 14px; color: #1c2028; white-space: nowrap; }
.erp-head small { font-size: 12px; }
.erp-head h2 small { color: #00008c; }
.bell { position: relative; margin-left: auto; width: 18px; height: 18px; padding: 0; border: 0; background: none; }
.badge { position: absolute; right: -5px; top: -9px; width: 13px; height: 13px; border-radius: 7px; background: #9a3030; color: #ccc; font-size: 10px; line-height: 13px; font-weight: bold; }
.tasks { width: 18px; height: 15px; margin: 0 12px 0 10px; }
.user { display: flex; align-items: center; height: 34px; padding-left: 15px; border-left: 1px solid #707070; font-weight: bold; font-size: 14px; color: #1c4163; white-space: nowrap; }
.dot { width: 13px; height: 13px; margin-right: 8px; border-radius: 50%; background: #911a1a; }
.caret { margin-left: 6px; border: 5px solid transparent; border-top: 6px solid #555; border-bottom: 0; }
.docs { flex: none; margin: 6px 0 0 21px; border-left: 1px solid #6c6c6c; font-size: 13px; color: #292929; }
.docrow { display: flex; height: 28px; white-space: nowrap; }
.docrow a { display: flex; align-items: center; flex: none; gap: 4px; padding: 0 6px 0 8px; border-right: 1px solid #6c6c6c; }
.docrow.second { height: 29px; }
.docrow.second a { border-bottom: 1px solid #6c6c6c; }
.docrow.second .on { border-bottom: 0; font-weight: bold; color: #173a52; }
.doc-grid { display: flex; align-items: center; padding: 0 9px; border-right: 1px solid #6c6c6c; }
.igrid { width: 16px; height: 14px; }
.idoc { width: 12px; height: 14px; }
.ix { width: 15px; height: 15px; }
mark { background: #8c8c00; color: #000; }
.voucher { display: flex; flex-direction: column; flex: 1; min-height: 0; margin: 10px 6px 0 20px; border: 1px solid #5d6366; border-width: 1px 1px 0; }
.vhead { display: flex; align-items: center; flex: none; height: 40px; padding: 0 16px 0 6px; background: #6b7173; border-bottom: 1px solid #5d6355; }
.users { width: 18px; height: 17px; margin-right: auto; }
.btn { width: 72px; height: 29px; margin-left: 11px; padding: 0; border: 1px solid #656a6c; border-radius: 2px; background: #747677; color: #34464c; }
.help { display: flex; align-items: center; justify-content: center; width: 43px; }
.help svg { width: 16px; height: 16px; }
.vbody { display: flex; flex: 1; min-height: 0; }
.vscroll { flex: 1; min-width: 0; padding: 0 4px 0 5px; overflow: hidden; }
.ghosts { display: flex; gap: 49px; padding-left: 5px; }
.ghosts i { width: 262px; height: 4px; border: 1px solid #6c6c6c; border-top: 0; border-radius: 0 0 2px 2px; }
.docline { display: flex; padding: 13px 5px 0; color: #2e2e2e; }
.docline div { display: flex; flex-direction: column; gap: 3px; }
.docline label { height: 19px; line-height: 20px; }
.docline input { height: 26px; padding: 0 5px; border: 1px solid #6a6a6a; border-radius: 2px; background: none; color: #000; }
.f1 { width: 141px; }
.f2 { width: 116px; margin: 0 49px 0 5px; }
.f3 { width: 262px; }
sup { color: #a00; font-size: 14px; font-weight: bold; line-height: 0; margin-left: 3px; vertical-align: 3px; }
input.num { text-align: right; }
.bar { display: flex; align-items: center; height: 30px; margin-top: 17px; padding: 0 13px 0 8px; background: #53687f; }
.bar svg { width: 15px; height: 12px; }
.bar h3 { margin: 0 auto 0 4px; font-size: 14px; color: #14233b; }
.bar select { width: 50px; height: 25px; border: 1px solid #666; border-radius: 2px; background: #7e7e7e; }
.form { display: grid; grid-template-columns: 1fr 1fr; gap: 47px; padding: 15px 31px 30px 15px; background: #797979; }
.col { display: flex; flex-direction: column; gap: 5px; min-width: 0; }
.row { display: flex; align-items: center; height: 28px; }
.row.gap { margin-top: 5px; }
.row label { flex: none; width: 156px; padding-top: 2px; color: #080808; }
.row input { flex: 1; min-width: 0; height: 28px; padding: 0 5px 1px; border: 1px solid #506a8a; border-radius: 2px; background: #7d7d7d; color: #050505; font-size: 14px; }
.row em { margin-left: 3px; font-style: normal; color: #8c2b2b; }
.mini { display: flex; align-items: center; justify-content: center; flex: none; width: 24px; height: 28px; margin-left: 5px; padding: 0; border: 1px solid #666; border-radius: 2px; background: #757575; color: #2c383c; }
.mini svg { width: 12px; height: 12px; }
.mini.wide { width: 70px; gap: 12px; padding-top: 5px; font-family: "Liberation Serif", serif; font-size: 12px; }

.sb { display: flex; flex-direction: column; align-items: center; flex: none; width: 15px; background: #f1f1f1; }
.sb b { width: 11px; background: #c1c1c1; flex: 1; }
.sb i { height: 16px; }
.sb i::before { content: ""; display: block; margin-top: 6px; border: 4px solid transparent; }
.sb .tri-up::before { border-top: 0; border-bottom: 5px solid #a0a0a0; }
.sb .tri-down::before { border-bottom: 0; border-top: 5px solid #505050; }
.sb.dim { background: #797979; }
.sb.dim b { flex: 0 1 156px; margin-top: 15px; background: #616161; }
.sb.dim .tri-up::before { border-bottom-color: #222; }

/* Charges drawer */
.charges { display: flex; flex: none; width: 327px; border-right: 1px solid #555; background: #fff; color: #607078; box-shadow: 0 0 16px rgba(0, 0, 0, .8); z-index: 1; }
.cbody { flex: 1; min-width: 0; overflow: hidden; }
.cbody h2 { height: 48px; padding: 12px 15px 0; background: #dfe5e7; font-size: 18px; line-height: 24px; color: #4d7080; }
.ctabs { display: flex; height: 31px; background: #f4f4f4; border-bottom: 1px solid #ddd; }
.ctabs button { height: 31px; padding: 0 8px; border: 1px solid #ddd; border-width: 1px 1px 0; background: #fff; font-size: 13px; color: #555; }
.cbody form { padding: 10px 10px 0; }
.cbody h3 { height: 27px; margin-bottom: 10px; padding: 0 5px; background: #dfe5e7; line-height: 26px; color: #76878e; }
.crow { display: flex; align-items: center; justify-content: space-between; height: 28px; margin-bottom: 15px; padding: 0 10px 0 5px; color: #6b6b6b; }
.crow + h3 { margin-top: 20px; }
.crow label { white-space: nowrap; }
.crow em { font-style: normal; color: #c0392b; }
.crow input, .crow select { width: 138px; height: 28px; padding: 0 5px; border: 1px solid #ccc; border-radius: 2px; background: #fff; color: #111; }
.crow.other { justify-content: flex-start; height: 24px; }
.crow.other label { width: 138px; }
.crow.other input { width: 103px; height: 23px; padding-right: 16px; background: #f5f5f5; }
.cbtns { display: flex; gap: 12px; margin-top: 39px; padding-left: 5px; }
.cbtns button { height: 30px; padding: 0 13px; border: 1px solid #ccc; border-radius: 2px; background: #e9e9e9; font-size: 14px; color: #607078; }

/* Status board */
.status { display: grid; grid-template-columns: 1fr 1fr; flex: 1; min-height: 0; font-family: "Liberation Serif", "Times New Roman", serif; text-align: center; color: #fff; }
.status section { display: flex; flex-direction: column; align-items: center; min-width: 0; }
.status h2 { font-size: 39px; line-height: 43px; }
.ok { background: #008000; padding-top: 149px; }
.ok strong { margin-top: 121px; font-size: 150px; line-height: 170px; }
.bad { background: #f00; padding-top: 188px; gap: 34px; }
.bad p { max-width: 350px; font-size: 22px; line-height: 24px; }
```
